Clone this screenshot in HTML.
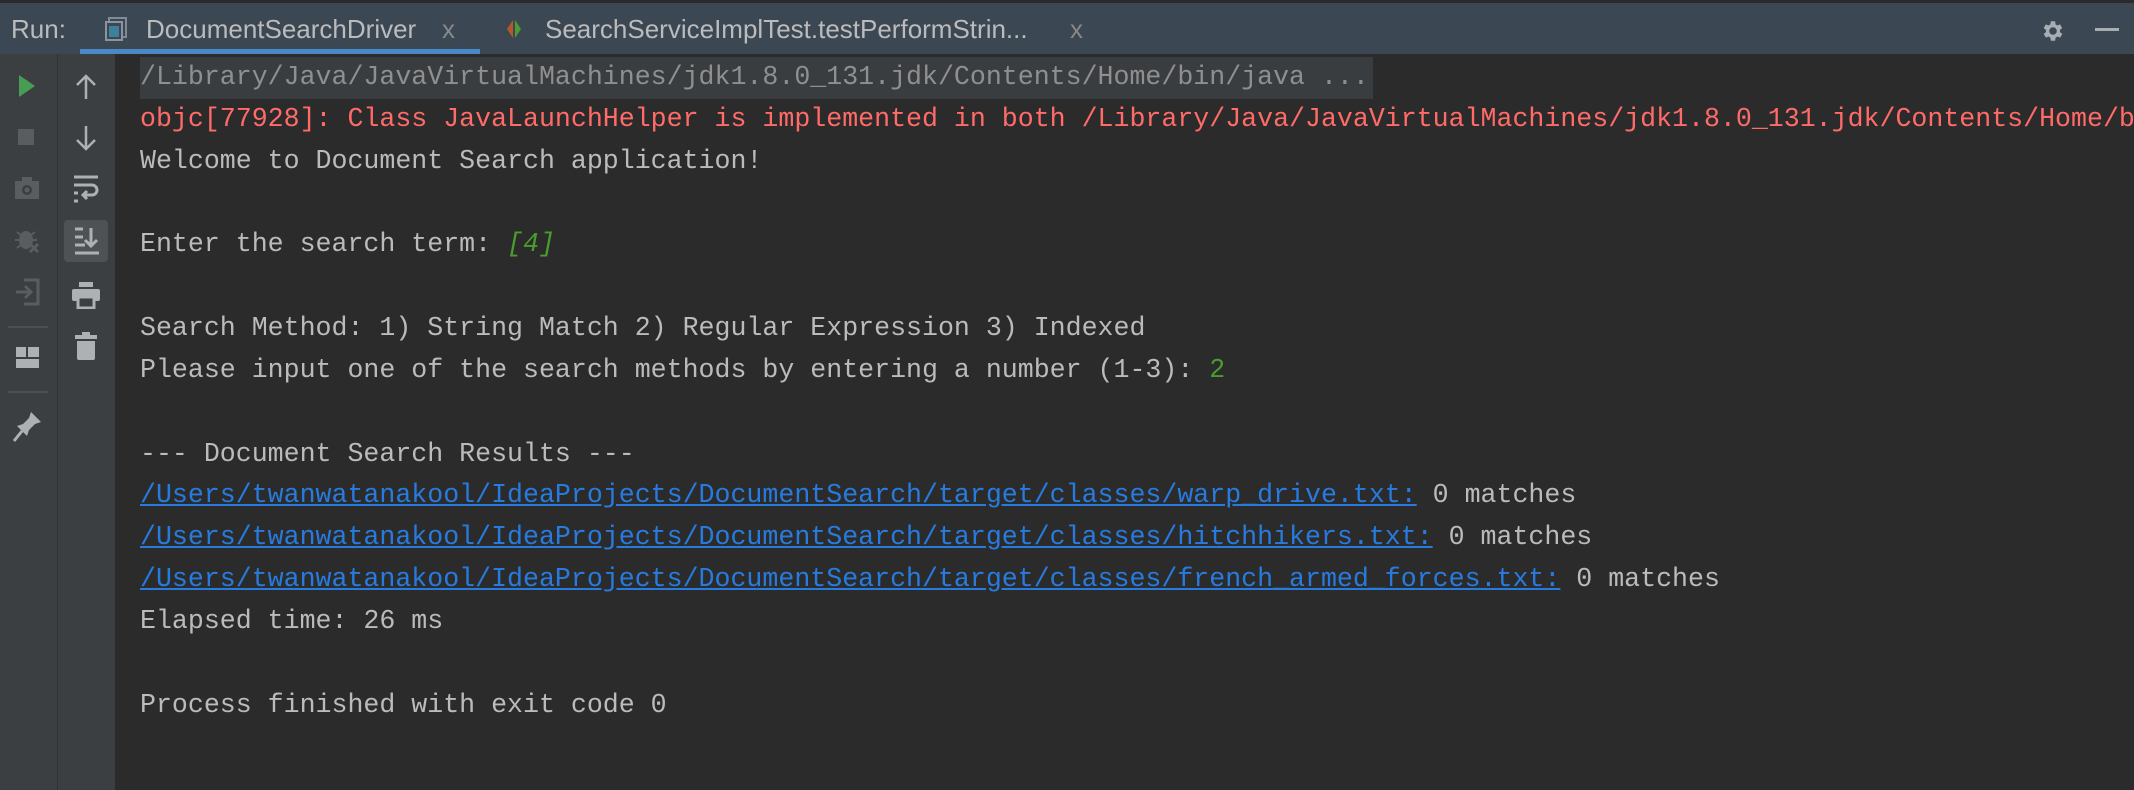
<!DOCTYPE html>
<html><head><meta charset="utf-8"><style>
html,body{margin:0;padding:0;width:2134px;height:790px;overflow:hidden;background:#2b2b2b;}
.hdr{position:absolute;left:0;top:0;width:2134px;height:54px;background:#3c4754;border-top:3px solid #2b2b2b;box-sizing:border-box;font-family:"Liberation Sans",sans-serif;font-size:26px;color:#bbbbbb;}
.hdr span{position:absolute;top:11px;}
.ul{position:absolute;left:80px;top:49px;width:400px;height:5px;background:#4a88c7;}
.tb1{position:absolute;left:0;top:54px;width:57px;height:736px;background:#3c3f41;border-right:1px solid #323232;}
.tb2{position:absolute;left:58px;top:54px;width:57px;height:736px;background:#3c3f41;}
.con{position:absolute;left:140px;top:57px;width:1994px;overflow:hidden;font-family:"Liberation Mono",monospace;font-size:26.6px;line-height:41.85px;color:#bbbbbb;white-space:pre;}
.g{color:#8f8f8f;background:#3a3d40;margin-left:-4px;padding:0 4px;display:inline-block;}
.r{color:#ff6b68}
.gr{color:#4a9c2f;font-style:italic}
.gr2{color:#4a9c2f}
a{color:#287bde;text-decoration:underline;}
svg{position:absolute;}
</style></head><body>
<div class="hdr">
<span style="left:11px">Run:</span>
<svg style="left:105px;top:14px" width="22" height="24"><rect x="4" y="1" width="17" height="19" fill="none" stroke="#7f8b96" stroke-width="2"/><rect x="1" y="5" width="16" height="18" fill="#3c4754" stroke="#8a949e" stroke-width="2"/><rect x="4" y="9" width="10" height="11" fill="#3e7f9c"/></svg>
<span style="left:146px">DocumentSearchDriver</span>
<span style="left:442px;color:#888">x</span>
<svg style="left:506px;top:16px" width="16" height="20"><path d="M7 1 L1 10 L7 19Z" fill="#b5562f"/><path d="M9 1 L15 10 L9 19Z" fill="#4a9c2f"/></svg>
<span style="left:545px">SearchServiceImplTest.testPerformStrin...</span>
<span style="left:1070px;color:#888">x</span>
<svg style="left:2040px;top:15px" width="26" height="26" viewBox="0 0 24 24"><path fill="#a8adb2" d="M19.4 13a7.5 7.5 0 000-2l2.1-1.6-2-3.5-2.5 1a7.4 7.4 0 00-1.700-1L15 3h-4l-.4 2.9a7.4 7.4 0 00-1.7 1l-2.5-1-2 3.5L6.5 11a7.5 7.5 0 000 2l-2.1 1.6 2 3.5 2.5-1a7.4 7.4 0 001.7 1L11 21h4l.4-2.9a7.4 7.4 0 001.7-1l2.5 1 2-3.5zM13 15.5a3.5 3.5 0 110-7 3.5 3.5 0 010 7z" transform="translate(-1 0)"/></svg>
<div style="position:absolute;left:2095px;top:25px;width:24px;height:3px;background:#a8adb2"></div>
</div>
<div class="ul"></div>
<div class="tb1"></div>
<div class="tb2"></div>
<svg style="left:17px;top:74px" width="20" height="24"><path d="M2 1 L18 12 L2 23Z" fill="#499c54"/></svg>
<div style="position:absolute;left:18px;top:129px;width:16px;height:16px;background:#5a5d5f"></div>
<svg style="left:14px;top:176px" width="26" height="24"><rect x="1" y="5" width="24" height="18" fill="#5a5d5f"/><rect x="8" y="1" width="10" height="5" fill="#5a5d5f"/><circle cx="13" cy="14" r="5" fill="#3c3f41"/><circle cx="13" cy="14" r="2.5" fill="#5a5d5f"/></svg>
<svg style="left:14px;top:226px" width="26" height="28"><ellipse cx="12" cy="14" rx="7" ry="9" fill="#5a5d5f"/><path d="M3 6 L7 9 M21 6 L17 9 M1 14H5 M19 14h4 M3 22l4-3" stroke="#5a5d5f" stroke-width="2"/><path d="M16 18 l8 8 M24 18 l-8 8" stroke="#5a5d5f" stroke-width="3"/></svg>
<svg style="left:14px;top:278px" width="26" height="28"><path d="M10 2H24V26H10" fill="none" stroke="#5a5d5f" stroke-width="3"/><path d="M2 14H16 M11 8l6 6-6 6" fill="none" stroke="#5a5d5f" stroke-width="3"/></svg>
<div style="position:absolute;left:8px;top:326px;width:40px;height:2px;background:#4d5052"></div>
<svg style="left:15px;top:346px" width="26" height="24"><rect x="1" y="1" width="10" height="10" fill="#aeb1b4"/><rect x="13" y="1" width="11" height="10" fill="#aeb1b4"/><rect x="1" y="13" width="23" height="9" fill="#aeb1b4"/></svg>
<div style="position:absolute;left:8px;top:391px;width:40px;height:2px;background:#4d5052"></div>
<svg style="left:13px;top:410px" width="30" height="32"><path d="M18 2 L28 12 L22 14 L16 20 L14 26 L4 16 L10 14 L16 8Z" fill="#aeb1b4"/><path d="M9 21 L1 31" stroke="#aeb1b4" stroke-width="3"/></svg>
<svg style="left:74px;top:74px" width="24" height="26"><path d="M12 25V3 M3 11l9-9 9 9" fill="none" stroke="#aeb1b4" stroke-width="2.5"/></svg>
<svg style="left:74px;top:125px" width="24" height="26"><path d="M12 1V23 M3 15l9 9 9-9" fill="none" stroke="#aeb1b4" stroke-width="2.5"/></svg>
<svg style="left:72px;top:174px" width="28" height="30"><path d="M2 3H26 M2 11H20a5 5 0 010 10H12 M15 17l-4 4 4 4 M2 19h4 M2 27h4" fill="none" stroke="#aeb1b4" stroke-width="3"/></svg>
<div style="position:absolute;left:64px;top:220px;width:44px;height:42px;background:#4e5254;border-radius:4px"></div>
<svg style="left:73px;top:226px" width="28" height="30"><path d="M2 3H10 M2 11H10 M2 19H12 M2 27H26 M18 2V20 M12 14l6 6 6-6" fill="none" stroke="#aeb1b4" stroke-width="3"/></svg>
<svg style="left:71px;top:281px" width="30" height="28"><rect x="8" y="1" width="14" height="5" fill="#aeb1b4"/><rect x="1" y="8" width="28" height="12" rx="2" fill="#aeb1b4"/><rect x="7" y="16" width="16" height="11" fill="#3c3f41" stroke="#aeb1b4" stroke-width="3"/></svg>
<svg style="left:74px;top:331px" width="24" height="30"><rect x="8" y="1" width="8" height="4" fill="#aeb1b4"/><rect x="1" y="4" width="22" height="4" fill="#aeb1b4"/><path d="M3 10H21V27a2 2 0 01-2 2H5a2 2 0 01-2-2Z" fill="#aeb1b4"/></svg>
<div class="con"><span class="g">/Library/Java/JavaVirtualMachines/jdk1.8.0_131.jdk/Contents/Home/bin/java ...</span>
<span class="r">objc[77928]: Class JavaLaunchHelper is implemented in both /Library/Java/JavaVirtualMachines/jdk1.8.0_131.jdk/Contents/Home/bin/java</span>
Welcome to Document Search application!

Enter the search term: <span class="gr">[4]</span>

Search Method: 1) String Match 2) Regular Expression 3) Indexed
Please input one of the search methods by entering a number (1-3): <span class="gr2">2</span>

--- Document Search Results ---
<a>/Users/twanwatanakool/IdeaProjects/DocumentSearch/target/classes/warp_drive.txt:</a> 0 matches
<a>/Users/twanwatanakool/IdeaProjects/DocumentSearch/target/classes/hitchhikers.txt:</a> 0 matches
<a>/Users/twanwatanakool/IdeaProjects/DocumentSearch/target/classes/french_armed_forces.txt:</a> 0 matches
Elapsed time: 26 ms

Process finished with exit code 0</div>
</body></html>
